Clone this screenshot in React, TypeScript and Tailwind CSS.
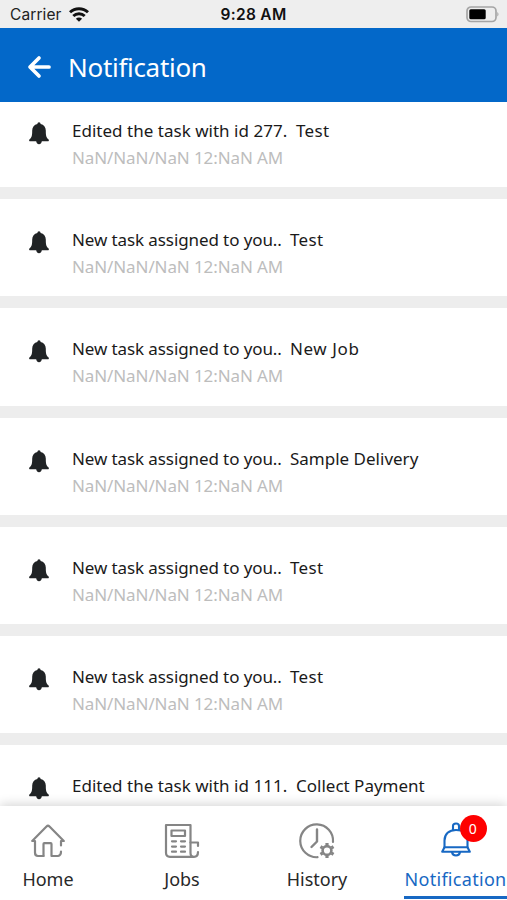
import type { ReactNode } from "react";

interface Notice {
  message: string;
  subject: string;
  date?: string;
  spacing: string;
  subjectSpacing?: string;
}

const DATE = "NaN/NaN/NaN 12:NaN AM";
const ASSIGNED = { message: "New task assigned to you..", date: DATE, spacing: "w-[218px] tracking-[-0.1px]" };
const EDITED = { spacing: "w-[224px] tracking-[0.02px]" };

const NOTICES: Notice[] = [
  { ...EDITED, message: "Edited the task with id 277.", subject: "Test", date: DATE, subjectSpacing: "tracking-[0.3px]" },
  { ...ASSIGNED, subject: "Test", subjectSpacing: "tracking-[0.3px]" },
  { ...ASSIGNED, subject: "New Job", subjectSpacing: "tracking-[0.6px]" },
  { ...ASSIGNED, subject: "Sample Delivery" },
  { ...ASSIGNED, subject: "Test", subjectSpacing: "tracking-[0.3px]" },
  { ...ASSIGNED, subject: "Test", subjectSpacing: "tracking-[0.3px]" },
  { ...EDITED, message: "Edited the task with id 111.", subject: "Collect Payment" },
];

function StatusBar() {
  return (
    <div className="h-7 shrink-0 bg-[#eeeeee] grid grid-cols-3 items-center pl-[10px] pr-2 pt-px font-['Inter',sans-serif] text-[#222]">
      <div className="flex items-center gap-[7px] text-[15.5px] tracking-[0.1px]">
        Carrier
        <svg className="-mt-px" width="20" height="15" viewBox="0 0 20 15" fill="none" stroke="#111" strokeWidth="2.9">
          <path d="M1 5.300a13 13 0 0 1 18 0" />
          <path d="M4.300 9a8.200 8.200 0 0 1 11.400 0" />
          <path d="M10 14.800 6.900 11.800a4.400 4.400 0 0 1 6.200 0z" fill="#111" stroke="none" />
        </svg>
      </div>
      <div className="text-center text-[15.5px] font-semibold whitespace-nowrap tracking-[0.3px] -ml-[2px] pt-px text-[#111]">9:28 AM</div>
      <svg className="justify-self-end" width="33" height="17" viewBox="0 0 33 17">
        <rect x="1" y="1" width="29" height="14.500" rx="4" fill="none" stroke="#a5a5a5" strokeWidth="1.700" />
        <rect x="3.300" y="3.300" width="16.400" height="10" rx="1.500" fill="#000" />
        <path d="M31.300 6v4.500c1.600-.7 1.600-3.800 0-4.500z" fill="#a5a5a5" />
      </svg>
    </div>
  );
}

function BellSolid() {
  return (
    <svg className="shrink-0" width="20" height="23" viewBox="0 0 20 23" fill="#202325">
      <path d="M10 .3c-1 0-1.500.7-1.600 1.700C5.200 2.700 3.200 5.200 3.200 8.500c0 5.400-.3 6.700-2.800 9-.6.7-.3 1.800.6 1.800h18c.9 0 1.200-1.100.6-1.800-2.500-2.300-2.800-3.600-2.800-9 0-3.300-2-5.800-5.200-6.500C11.500 1 11 .3 10 .3z" />
      <path d="M7.200 19h5.600c-.1 2-1.100 3.200-2.800 3.200S7.300 21 7.200 19z" />
    </svg>
  );
}

function NoticeRow({ message, subject, date, spacing, subjectSpacing = "" }: Notice) {
  return (
    <li className="h-[97.2px] shrink-0 bg-white flex pl-[29px] pt-[32px]">
      <BellSolid />
      <div className="ml-[23px] -mt-[5px] whitespace-nowrap">
        <div className="flex text-[17px] leading-[27px] text-[#1a1a1a]">
          <span className={spacing}>{message}</span>
          <span className={subjectSpacing}>{subject}</span>
        </div>
        {date && <p className="text-[17px] leading-[27px] tracking-[-0.1px] text-[#bdbdbd]">{date}</p>}
      </div>
    </li>
  );
}

function HomeIcon() {
  return (
    <svg width="34" height="34" viewBox="0 0 34 34" fill="none" stroke="#858585" strokeWidth="2.200" strokeLinecap="round" strokeLinejoin="round">
      <path d="M12.500 32H7Q4 32 4 28.500V17H1.200L15.500 2.500Q17 1 18.500 2.500L32.800 17H30V21.500" />
      <path d="M12.500 32V20Q12.500 19.200 13.300 19.200H19.700Q20.500 19.200 20.500 20V32H27Q30 31.500 30 27.500" />
    </svg>
  );
}

function JobsIcon() {
  return (
    <svg width="36" height="36" viewBox="0 0 36 36" fill="none" stroke="#858585" strokeWidth="2.200" strokeLinecap="round" strokeLinejoin="round">
      <path d="M30 33.800H6Q2 33.800 2 29.800V2H26.500V30Q26.500 33.800 30 33.800 34 33.800 34 29" />
      <path d="M26.500 19.500H34V23" />
      <rect x="7.500" y="7.500" width="13.500" height="5.500" />
      <path d="M8 18.300H12M17 18.300H21M8 23.600H12M17 23.600H21M8 28.700H12M17 28.700H21" />
    </svg>
  );
}

function HistoryIcon() {
  return (
    <svg width="36" height="36" viewBox="0 0 36 36" fill="none" stroke="#858585" strokeWidth="2.200" strokeLinecap="round" strokeLinejoin="round">
      <path d="M18.500 34.200A16.400 16.400 0 1 1 34 19" />
      <path d="M18 6.500V18.500L12.500 24" strokeWidth="2.400" />
      <g transform="translate(28 27.500)">
        <circle r="4.400" strokeWidth="2.600" />
        <path d="M0-5.300V-7.600M0 5.300V7.600M4.600-2.650 6.500-3.800M4.600 2.650 6.500 3.800M-4.600-2.650-6.500-3.800M-4.600 2.650-6.500 3.800" strokeWidth="3.200" strokeLinecap="butt" />
      </g>
    </svg>
  );
}

function BellOutline() {
  return (
    <svg width="30" height="35" viewBox="0 0 30 35" fill="none" stroke="#1768c3" strokeWidth="2.100" strokeLinecap="round" strokeLinejoin="round">
      <path d="M12 8V4Q12 1.500 15 1.500T18 4V8" />
      <path d="M3.500 25.500V18.500C3.500 12 8 8 15 8S26.500 12 26.500 18.500V25.500" />
      <path d="M3.500 25.300H26.500L28.800 29.700H1.200z" />
      <path d="M11 30Q11.500 33.500 15 33.500T19 30" />
    </svg>
  );
}

interface TabProps {
  label: string;
  icon: ReactNode;
  active?: boolean;
  className?: string;
}

function Tab({ label, icon, active = false, className = "" }: TabProps) {
  return (
    <div className={`flex flex-col items-center pt-[17px] ${active ? "text-[#1768c3]" : "text-[#282828]"} ${className}`}>
      <div className="h-9 flex items-center justify-center">{icon}</div>
      <span className="mt-[6px] text-[18px] leading-7 whitespace-nowrap">{label}</span>
    </div>
  );
}

export default function App() {
  return (
    <div className="w-[507px] h-[900px] flex flex-col overflow-hidden bg-white font-['Noto_Sans',sans-serif]">
      <StatusBar />
      <header className="h-[74px] shrink-0 bg-[#0368c9] flex items-center pl-[27px] pt-[4px] text-white">
        <svg width="24" height="24" viewBox="0 0 24 24" fill="none" stroke="currentColor" strokeWidth="3.700" strokeLinecap="round" strokeLinejoin="round">
          <path d="M12 3 3 12 12 21M3.500 12H22" />
        </svg>
        <h1 className="ml-[17px] text-[26px] leading-8 tracking-[-0.3px]">Notification</h1>
      </header>

      <ul className="flex-1 min-h-0 overflow-hidden bg-[#ededed] flex flex-col gap-3 *:first:-mt-[12px]">
        {NOTICES.map((notice, i) => (
          <NoticeRow key={i} {...notice} />
        ))}
      </ul>

      <nav className="relative h-[94px] shrink-0 bg-white grid grid-cols-[96px_172px_98px_141px] shadow-[0_-2px_10px_rgba(0,0,0,0.16)]">
        <Tab label="Home" icon={<HomeIcon />} />
        <Tab label="Jobs" icon={<JobsIcon />} />
        <Tab label="History" icon={<HistoryIcon />} />
        <Tab
          label="Notification"
          active
          className="w-[103px] h-[93px] justify-self-end border-b-[3px] border-[#1768c3] tracking-[0.3px]"
          icon={
            <div className="relative -mt-[3px]">
              <BellOutline />
              <span className="absolute left-[19px] -top-[7px] size-[27px] rounded-full bg-[#fe0000] text-white text-[14px] flex items-center justify-center">0</span>
            </div>
          }
        />
      </nav>
    </div>
  );
}
